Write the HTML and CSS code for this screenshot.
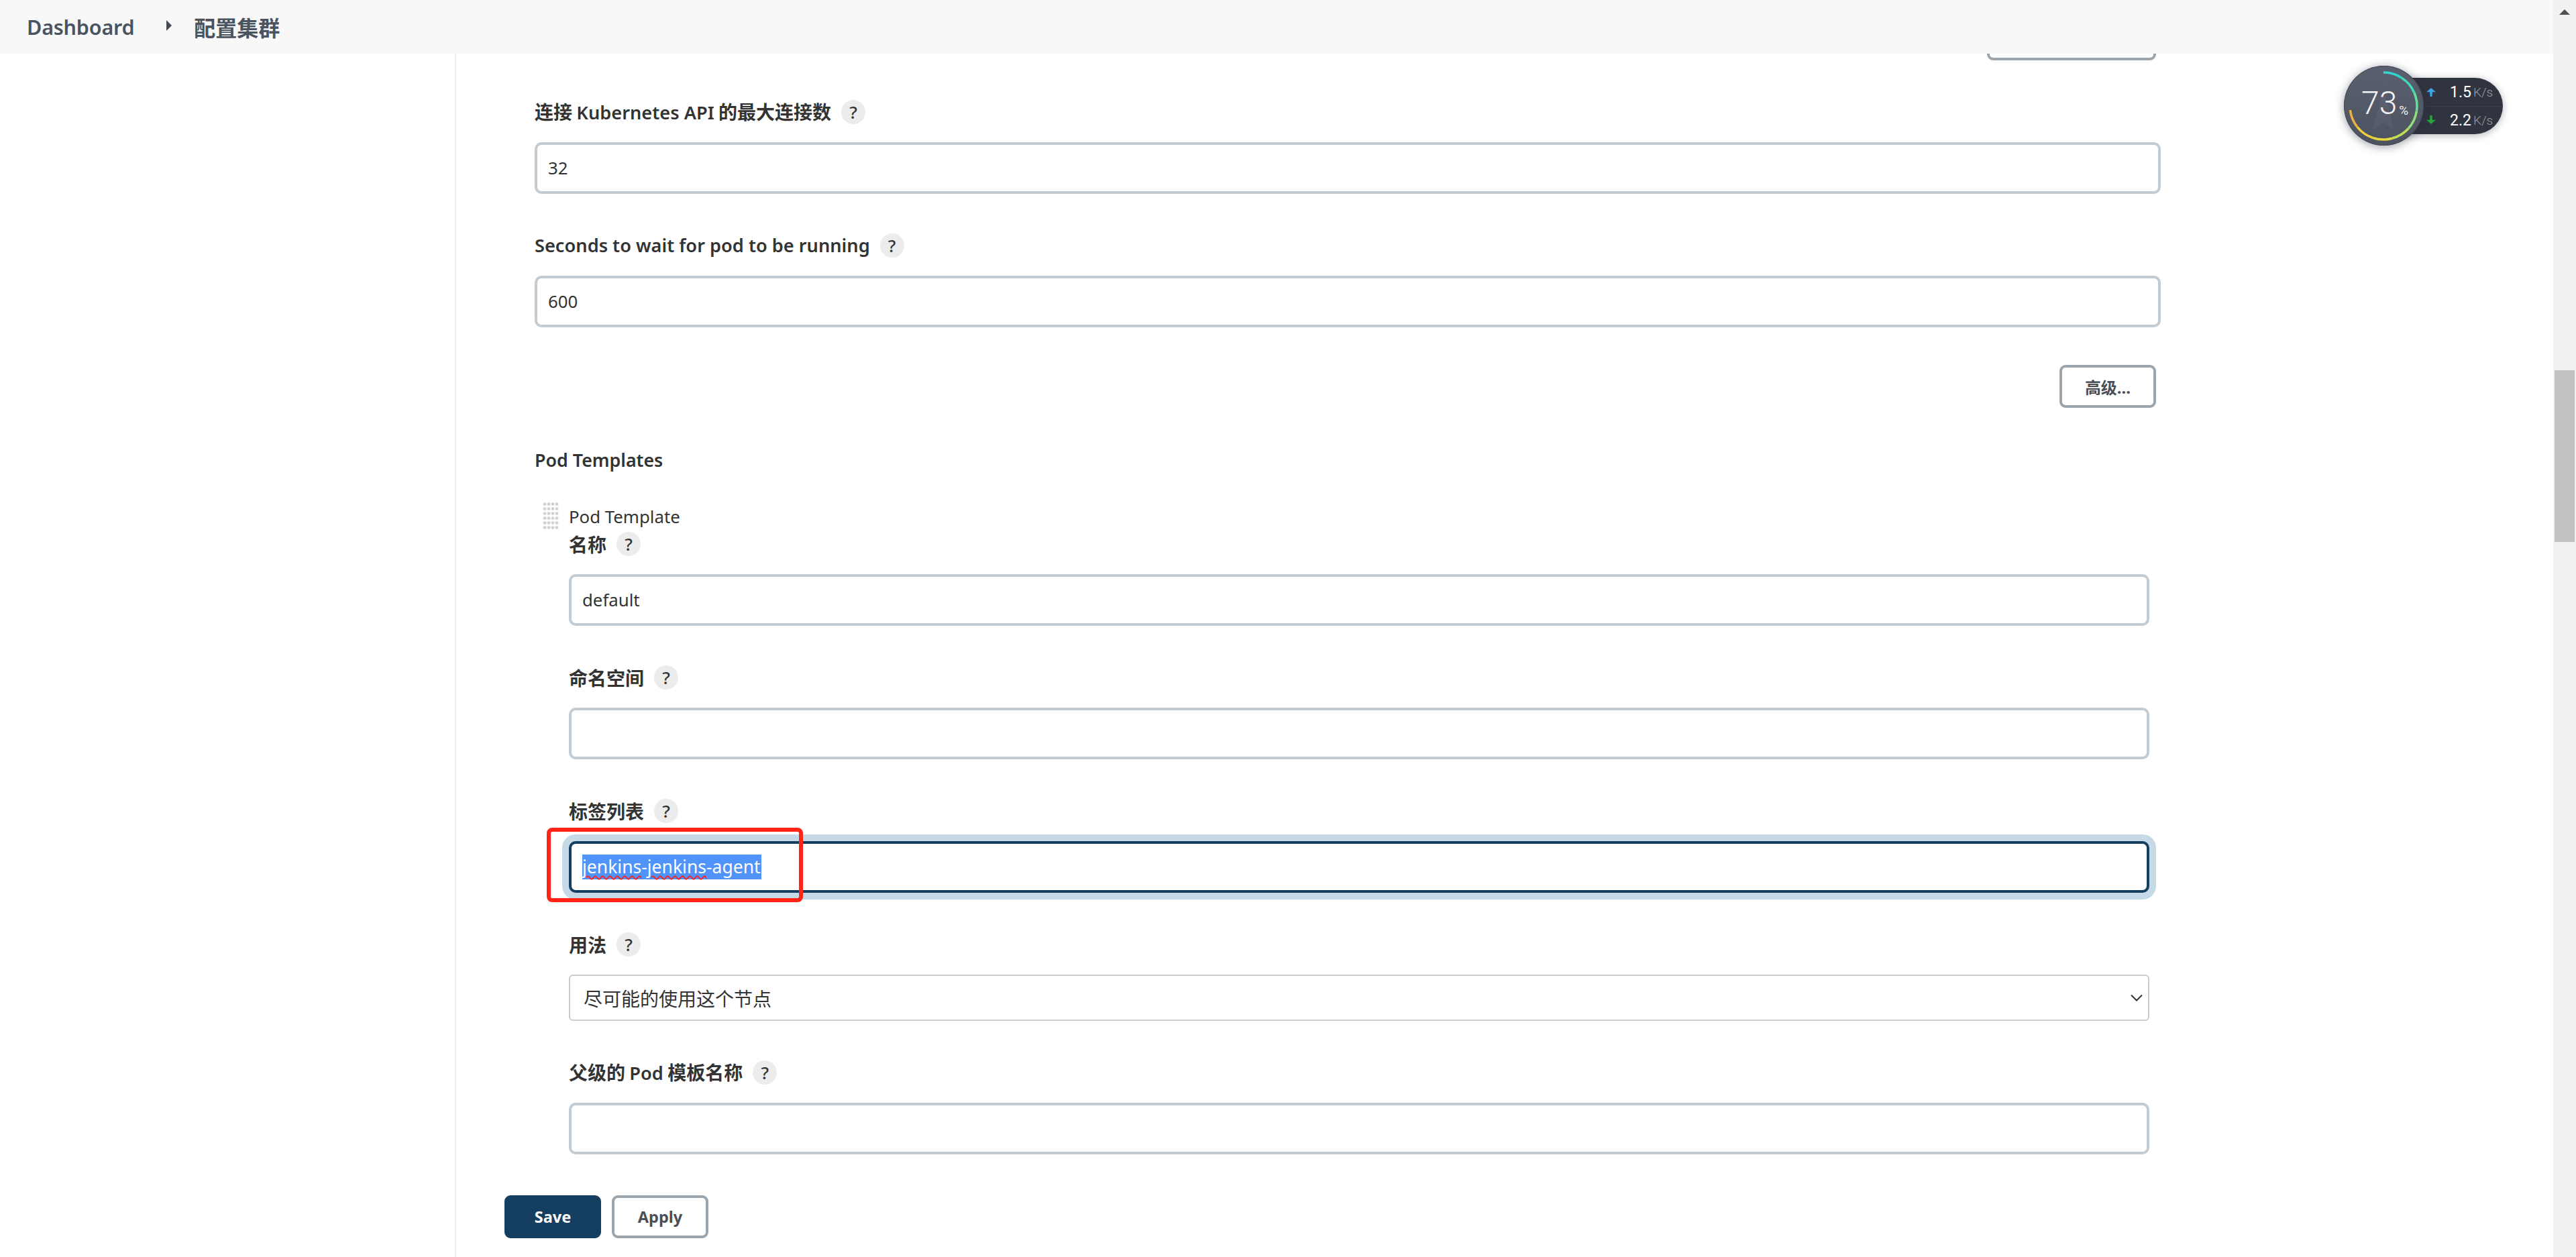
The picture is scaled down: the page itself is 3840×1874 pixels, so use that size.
FILE: index.html
```html
<!DOCTYPE html>
<html lang="zh">
<head>
<meta charset="utf-8">
<title>配置集群</title>
<link rel="stylesheet" href="styles.css">
</head>
<body>
<div class="page">
  <header class="crumbs">
    <span class="crumb-latin">Dashboard</span>
    <span class="crumb-caret"></span>
    <span class="crumb-cjk">配置集群</span>
  </header>
  <div class="layout">
    <aside class="side"></aside>
    <main class="content">
      <div class="clip-row"><button class="btn btn-clipped" type="button"></button></div>

      <section class="wide field first">
        <div class="label"><span>连接 <span class="lt">Kubernetes API</span> 的最大连接数</span><span class="help">?</span></div>
        <div class="input">32</div>
      </section>
      <section class="wide field">
        <div class="label"><span class="lt">Seconds to wait for pod to be running</span><span class="help">?</span></div>
        <div class="input">600</div>
      </section>
      <div class="adv-row"><button class="btn btn-adv" type="button">高级...</button></div>

      <h3 class="group-title">Pod Templates</h3>
      <div class="template">
        <div class="grip"></div>
        <div class="template-body">
          <div class="template-title">Pod Template</div>
          <section class="inner-field">
            <div class="label"><span>名称</span><span class="help">?</span></div>
            <div class="input">default</div>
          </section>
          <section class="inner-field">
            <div class="label"><span>命名空间</span><span class="help">?</span></div>
            <div class="input"></div>
          </section>
          <section class="inner-field">
            <div class="label"><span>标签列表</span><span class="help">?</span></div>
            <div class="input input-focus"><span class="selected"><span class="misspelt">jenkins</span>-<span class="misspelt">jenkins</span>-agent</span></div>
          </section>
          <section class="inner-field">
            <div class="label"><span>用法</span><span class="help">?</span></div>
            <div class="select">
              <span>尽可能的使用这个节点</span>
              <svg class="chevron" viewBox="0 0 18 11" width="18" height="11"><path d="M1 1.5 L9 9.5 L17 1.5" fill="none" stroke="#333" stroke-width="2"/></svg>
            </div>
          </section>
          <section class="inner-field">
            <div class="label"><span>父级的 <span class="lt">Pod</span> 模板名称</span><span class="help">?</span></div>
            <div class="input"></div>
          </section>
        </div>
      </div>
      <div class="actions">
        <button class="btn btn-save" type="button">Save</button>
        <button class="btn btn-apply" type="button">Apply</button>
      </div>
    </main>
  </div>
</div>
<div class="scrollbar">
  <div class="scroll-up"></div>
  <div class="scroll-thumb"></div>
</div>

<div class="annotation"></div>

<div class="net-widget">
  <div class="net-pill">
    <div class="net-row">
      <svg class="net-arrow" viewBox="0 0 14 13" width="14" height="13"><path d="M7 0 L14 6.5 L9 6 L8.5 13 L5.5 13 L5 6 L0 6.5 Z" fill="#3ea6e6"/></svg>
      <span class="net-val">1.5</span><span class="net-unit">K/s</span>
    </div>
    <div class="net-row">
      <svg class="net-arrow" viewBox="0 0 14 13" width="14" height="13"><path d="M7 13 L14 6.5 L9 7 L8.5 0 L5.5 0 L5 7 L0 6.5 Z" fill="#25a83a"/></svg>
      <span class="net-val">2.2</span><span class="net-unit">K/s</span>
    </div>
  </div>
  <div class="net-dial">
    <svg class="net-ring" viewBox="0 0 120 120" width="120" height="120">
      <path d="M60 36 L76 96 L60 84 L44 96 Z" fill="#ffffff" opacity=".04"/>
      <g fill="none" stroke-width="3.5">
        <path d="M60 10 A50 50 0 0 1 87.2 18.1" stroke="#2ed6cf"/>
        <path d="M87.2 18.1 A50 50 0 0 1 105.7 39.7" stroke="#3fdcb5"/>
        <path d="M105.7 39.7 A50 50 0 0 1 109.4 67.8" stroke="#60e098"/>
        <path d="M109.4 67.8 A50 50 0 0 1 97.2 93.5" stroke="#8fe07a"/>
        <path d="M97.2 93.5 A50 50 0 0 1 72.9 108.3" stroke="#c0dc58"/>
        <path d="M72.9 108.3 A50 50 0 0 1 44.5 107.6" stroke="#e8d83c"/>
        <path d="M44.5 107.6 A50 50 0 0 1 21.1 91.5" stroke="#eed03c"/>
        <path d="M21.1 91.5 A50 50 0 0 1 10.4 66.1" stroke="#f0b03e"/>
      </g>
    </svg>
    <div class="net-percent"><span class="net-num">73</span><span class="net-sign">%</span></div>
  </div>
</div>
</body>
</html>
```

FILE: styles.css
```css
* { box-sizing: border-box; }
html, body { margin: 0; height: 1874px; overflow: hidden; background: #fff; }
body {
  display: flex;
  position: relative;
  font-family: "Noto Sans", "Noto Sans CJK SC", sans-serif;
  color: #333;
  font-size: 28px;
}
.page { flex: 1; min-width: 0; display: flex; flex-direction: column; height: 1874px; }

.crumbs {
  height: 80px;
  flex: none;
  background: #f8f8f8;
  display: flex;
  align-items: center;
  padding-left: 40px;
  color: #4a5360;
  font-weight: 600;
}
.crumb-latin { font-size: 30.5px; letter-spacing: -.2px; }
.crumb-caret {
  width: 0; height: 0;
  margin: -4px 33px 0 48px;
  border-left: 8px solid #444b55;
  border-top: 8px solid transparent;
  border-bottom: 8px solid transparent;
}
.crumb-cjk { font-size: 32px; font-family: "Noto Sans CJK SC", sans-serif; font-weight: 700; }

.layout { flex: 1; display: flex; min-height: 0; overflow: hidden; }
.side { width: 680px; flex: none; border-right: 2px solid #eeeeee; }
.content { flex: 1; min-width: 0; padding-left: 117px; padding-right: 585px; }

.clip-row { height: 10px; display: flex; justify-content: flex-end; align-items: flex-end; overflow: hidden; margin-right: 7px; }
.btn-clipped { width: 252px; height: 64px; flex: none; }

.btn {
  border: 4px solid #9aa5ae;
  border-radius: 9px;
  background: #fff;
  color: #4a4f57;
  font-family: "Noto Sans", "Noto Sans CJK SC", sans-serif;
  font-weight: 700;
  font-size: 24px;
  padding: 0;
}

.field { margin-top: 59px; }
.label {
  display: flex;
  align-items: center;
  height: 36px;
  font-weight: 700;
  font-size: 28px;
  line-height: 36px;
  color: #333;
  font-family: "Noto Sans CJK SC", "Noto Sans", sans-serif;
}
.lt { font-family: "Noto Sans", sans-serif; font-size: 27.2px; font-weight: 600; }
.help {
  width: 36px; height: 36px;
  margin-left: 15px;
  flex: none;
  border-radius: 50%;
  background: #ececec;
  color: #333;
  font-family: "Noto Sans", sans-serif;
  font-weight: 500;
  font-size: 26px;
  text-align: center;
  line-height: 36px;
}
.input {
  margin-top: 27px;
  height: 77px;
  border: 4px solid #c3ccd3;
  border-radius: 10px;
  background: #fff;
  padding-left: 16px;
  line-height: 69px;
  font-size: 25.8px;
  color: #333;
  white-space: nowrap;
}
.wide .input { width: 2424px; }
.input-focus {
  border-color: #153f60;
  box-shadow: 0 0 0 10px #c5d9e6;
}
.selected {
  display: inline-block;
  height: 37px;
  line-height: 36px;
  background: #4f93fb;
  color: #fff;
  font-size: 26.5px;
  padding-right: 1px;
}
.misspelt { text-decoration: underline wavy #ff2020 2px; text-underline-offset: 3px; }

.adv-row { display: flex; justify-content: flex-end; margin-top: 56px; margin-right: 7px; }
.btn-adv { width: 144px; height: 64px; }

.group-title {
  margin: 62px 0 0;
  font-size: 26.8px;
  line-height: 32px;
  font-weight: 600;
  color: #333;
}

.template { display: flex; margin-top: 46px; margin-left: 12px; }
.grip {
  width: 24px; height: 42px;
  flex: none;
  margin-right: 15px;
  background-image: radial-gradient(circle at 50% 50%, #c4c4c4 0, #d6d6d6 35%, transparent 70%);
  background-size: 6px 7px;
}
.template-body { width: 2356px; }
.template-title { font-size: 25.8px; line-height: 36px; margin-top: 4px; height: 41px; color: #333; }
.inner-field { margin-top: 59px; }
.template-title + .inner-field { margin-top: 0; }
.select {
  margin-top: 27px;
  height: 69px;
  border: 2px solid #c8ccd1;
  border-radius: 6px;
  padding: 0 8px 0 20px;
  display: flex;
  align-items: center;
  justify-content: space-between;
  color: #333;
  font-size: 28px;
  font-family: "Noto Sans CJK SC", sans-serif;
}
.chevron { flex: none; }

.actions { display: flex; gap: 16px; margin-top: 61px; margin-left: -45px; }
.btn-save, .btn-apply { width: 144px; height: 64px; font-size: 23.5px; }
.btn-save { background: #153f60; border-color: #153f60; color: #fff; }

.scrollbar { width: 34px; flex: none; background: #f1f1f1; position: relative; }
.scroll-up {
  position: absolute; left: 9px; top: 14px;
  width: 0; height: 0;
  border-left: 8px solid transparent;
  border-right: 8px solid transparent;
  border-bottom: 8px solid #505050;
}
.scroll-thumb { position: absolute; left: 2px; right: 2px; top: 552px; height: 256px; background: #c1c1c1; }

.annotation {
  position: absolute;
  left: 815px; top: 1234px;
  width: 382px; height: 111px;
  border: 6px solid #ff2415;
  border-radius: 8px;
  pointer-events: none;
}

.net-widget { position: absolute; left: 3494px; top: 98px; width: 237px; height: 119px; font-family: Roboto, sans-serif; }
.net-pill {
  position: absolute; right: 0; top: 18px;
  width: 180px; height: 84px;
  border-radius: 0 42px 42px 0;
  background: #30343f;
  box-shadow: 0 2px 12px rgba(40,44,60,.35);
  padding-left: 63px;
  display: flex; flex-direction: column;
}
.net-row { height: 42px; display: flex; align-items: center; color: #fff; }
.net-row + .net-row { border-top: 1px solid #3e424d; }
.net-arrow { position: absolute; left: 66px; }
.net-row:first-child .net-arrow { top: 15px; }
.net-row + .net-row .net-arrow { top: 56px; }
.net-val { margin-left: 38px; width: 32px; font-size: 23px; text-align: right; font-weight: 400; }
.net-unit { margin-left: 3px; font-size: 19px; color: #9a9da6; font-weight: 300; }
.net-dial {
  position: absolute; left: 0; top: 0;
  width: 119px; height: 119px;
  border-radius: 50%;
  background: linear-gradient(#5b6070, #4d5260);
  box-shadow: 0 0 0 1px #454a57 inset, 0 2px 14px rgba(40,44,60,.45);
}
.net-ring { position: absolute; left: -1px; top: 0; }
.net-percent { position: absolute; left: 26px; top: 27px; display: flex; align-items: flex-end; color: #f2f3f5; white-space: nowrap; }
.net-num { font-size: 48px; line-height: 58px; font-weight: 300; }
.net-sign { font-size: 19px; line-height: 20px; margin: 0 0 8px 3px; font-weight: 400; }
```
